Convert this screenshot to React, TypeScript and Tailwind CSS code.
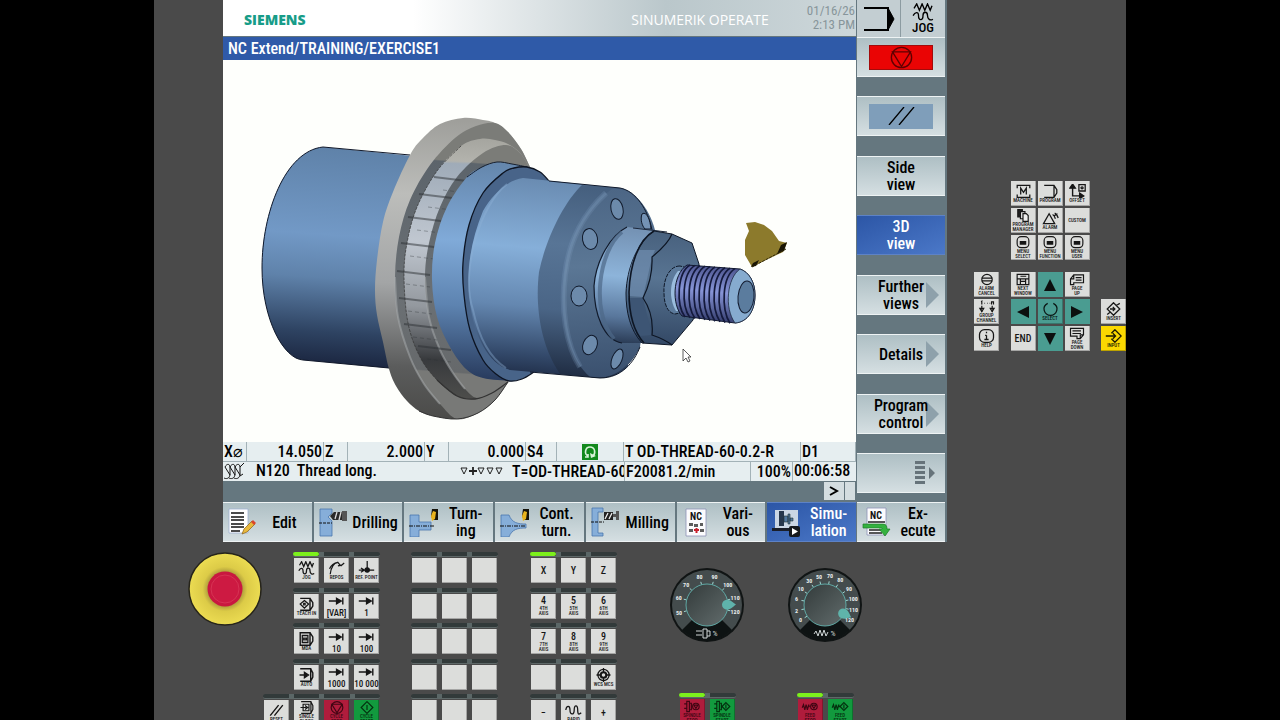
import type { ReactNode } from 'react';

const HMI_FONT = "font-['Roboto_Condensed','Roboto',sans-serif]";

/* ---------- Small drawings, one shared grid per icon ---------- */

const ICONS: Record<string, ReactNode> = {
  machine: (
    <>
      <path d="M3 6V2h18v4M3 15v4h18v-4" />
      <path d="M8 15V6l4 6 4-6v9" />
    </>
  ),
  program: <path d="M3 2h14l4 6v5l-4 6H3M17 2v17" />,
  offset: (
    <>
      <path d="M5 4v13h12" strokeWidth="2" />
      <path d="M1 6l4-6 4 6zM15 13l6 4-6 4z" fill="currentColor" />
      <path d="M14 1h9v9h-9z" />
      <circle cx="18.500" cy="5.500" r="1.500" />
    </>
  ),
  manager: (
    <>
      <path d="M4 1h7v11H4z" fill="#222" />
      <path d="M8 4h7v11H8z" fill="#ddd" />
      <path d="M12 7h5l3 3v9h-8z" fill="#eee" />
    </>
  ),
  alarm: <path d="M2 18L10 4l8 14zM15 5c2 1 3 3 4 6M18 3c3 1 4 4 5 7M17 7l5-3" />,
  menu: (
    <>
      <rect x="3" y="1" width="18" height="17" rx="6" />
      <path d="M7 9h10M7 12h10" strokeWidth="3" />
    </>
  ),
  cancel: (
    <>
      <circle cx="12" cy="10" r="8" />
      <path d="M4 8h16M4 12h16" />
    </>
  ),
  channel: (
    <>
      <path d="M4 9v9M20 9v9M8 5h1M12 5h1M16 5h1" />
      <path d="M1 13l3 5 3-5zM17 13l3 5 3-5zM3 3l1-1v5M19 7V3h3v4" fill="none" />
    </>
  ),
  help: (
    <>
      <rect x="2" y="1" width="20" height="18" rx="7" />
      <path d="M12 9v6M9 15h6M10 9h2M12 4v2" />
    </>
  ),
  window: <path d="M3 2h18v16H3zM3 9h18M8 9v9M8 13h8M16 9v9M8 5h9" />,
  pageUp: <path d="M7 3h15v12H7v3H2V9l5-6zM2 9h5V3M10 7h9M10 11h9" />,
  pageDown: <path d="M2 2h20v10l-5 6h-5v-4H2zM5 6h13M5 10h13M17 18v-6h5" />,
  select: <path d="M8 2C4 4 2 8 3 12c1 4 5 7 9 7s8-3 9-7c1-4-1-8-5-10" />,
  insert: <path d="M12 1l9 9-9 9-9-9zM7 10h7M11 7l3 3-3 3M16 5l5-3M8 14l-5 4" />,
  input: <path d="M9 6l5-5 9 9-9 9-5-5M1 10h14M11 6l4 4-4 4" />,
  jog: (
    <>
      <path d="M2 6l3-5 3 7 3-7 3 7 3-7 3 7 2-5" />
      <path d="M1 14c2-4 6-5 6 0 0 6 5 6 5 0 0-5 5-5 5 0 0 4 3 6 6 4" />
    </>
  ),
  repos: <path d="M3 19C4 10 8 3 14 2l4 5M2 11C5 5 9 3 14 2M18 7l5-4M14 7l5-1" />,
  refPoint: (
    <>
      <path d="M1 13h22M13 0v13M4 10l5 3-5 3" />
      <circle cx="13" cy="13" r="3" fill="currentColor" />
    </>
  ),
  teach: (
    <>
      <path d="M3 2h14v17H3M17 2l4 6v5l-4 6" strokeWidth="2" />
      <path d="M9 5l6 5-6 6-6-6zM8 12V9h2v3" />
    </>
  ),
  mda: (
    <>
      <path d="M3 1h14v18H3zM17 1l4 6v6l-4 6" strokeWidth="2" />
      <path d="M6 5h8v10H6zM8 12V8M10 12V8M12 12V8" />
    </>
  ),
  auto: (
    <>
      <path d="M3 1h15v18H3M18 1l3 6v6l-3 6" strokeWidth="2" />
      <path d="M2 10h9M9 6l6 4-6 4z" fill="currentColor" />
    </>
  ),
  step: (
    <>
      <path d="M1 10h15M21 5v10" strokeWidth="2" />
      <path d="M12 6l7 4-7 4z" fill="currentColor" />
    </>
  ),
  reset: <path d="M3 18L15 3M9 18L21 3" strokeWidth="2" />,
  single: (
    <>
      <path d="M3 1h15v18H3M18 1l3 6v6l-3 6" />
      <path d="M6 5h9v10H6zM2 10h9M9 7l4 3-4 3" />
    </>
  ),
  stop: (
    <>
      <circle cx="12" cy="10" r="9" />
      <path d="M4 5h16l-8 13z" />
    </>
  ),
  start: <path d="M12 1l9 9-9 9-9-9zM12 6v8" />,
  wcs: (
    <>
      <circle cx="12" cy="10" r="8" />
      <circle cx="12" cy="10" r="4" strokeWidth="3" />
      <path d="M12 0v6M12 14v6M2 10h6M16 10h6" />
    </>
  ),
  rapid: <path d="M1 10c1-7 6-7 6 0s6 8 6 0 5-8 5 0 2 6 5 4" />,
  spindleStop: (
    <>
      <path d="M0 6h4M0 13h4M4 2h4v16H4zM8 5h3v10H8z" />
      <circle cx="18" cy="10" r="5" />
      <path d="M15 8h6l-3 5z" />
    </>
  ),
  spindleStart: <path d="M0 6h4M0 13h4M4 2h4v16H4zM8 5h3v10H8zM18 4l6 6-6 6-6-6zM18 7v6" />,
  feedStop: (
    <>
      <path d="M0 12l2-5 2 8 2-8 2 8 2-8 1 4" />
      <circle cx="18" cy="10" r="5" />
      <path d="M15 8h6l-3 5z" />
    </>
  ),
  feedStart: <path d="M0 12l2-5 2 8 2-8 2 8 2-8 1 4M18 4l6 6-6 6-6-6zM18 7v6" />,
};

function Icon({
  name,
  className = 'h-[14px] w-[17px]',
  weight = 1.8,
}: {
  name: string;
  className?: string;
  weight?: number;
}) {
  return (
    <svg
      viewBox="0 0 24 20"
      className={`shrink-0 ${className}`}
      fill="none"
      stroke="currentColor"
      strokeWidth={weight}
      aria-hidden="true"
    >
      {ICONS[name]}
    </svg>
  );
}

/* ---------- Hardware keys ---------- */

interface KeyProps {
  icon?: string;
  big?: string;
  lines?: string[];
  tone?: string;
  label?: string;
}

function Key({ icon, big, lines = [], tone = 'bg-[#dcdddb] text-[#161616]', label }: KeyProps) {
  return (
    <button
      type="button"
      aria-label={label}
      className={`flex h-[25px] w-[25px] shrink-0 flex-col items-center justify-center overflow-hidden whitespace-nowrap shadow-[inset_-1px_-1px_0_rgba(0,0,0,0.25)] ${tone}`}
    >
      {icon && <Icon name={icon} className={lines.length > 1 ? 'h-[13px] w-[18px]' : 'h-[14px] w-[17px]'} />}
      {big && (
        <span className={`font-medium leading-[10px] ${icon ? 'text-[9px]' : 'text-[10px]'}`}>{big}</span>
      )}
      {lines.map((line) => (
        <span key={line} className="text-[5px] font-medium leading-[5px]">
          {line}
        </span>
      ))}
    </button>
  );
}

const TEAL = 'bg-[#4a9c91] text-[#0b1715]';
const RED = 'bg-[#b01c3c] text-[#3f0613]';
const GREEN = 'bg-[#129a3e] text-[#04300f]';

function Triangle({ rotate, label }: { rotate: string; label: string }) {
  return (
    <button
      type="button"
      aria-label={label}
      className={`flex h-[25px] w-[25px] items-center justify-center ${TEAL}`}
    >
      <svg viewBox="0 0 12 12" className={`h-3 w-3 ${rotate}`} fill="#0c0f0f" aria-hidden="true">
        <path d="M6 0l6 12H0z" />
      </svg>
    </button>
  );
}

function CursorKeys() {
  return (
    <aside className="grid w-[152px] shrink-0 grid-cols-[25px_1fr_25px] gap-y-[12px] overflow-hidden">
      <div />
      <div className="grid grid-cols-[25px_25px_25px] justify-center gap-[2px]">
        <Key icon="machine" lines={['MACHINE']} />
        <Key icon="program" lines={['PROGRAM']} />
        <Key icon="offset" lines={['OFFSET']} />
        <Key icon="manager" lines={['PROGRAM', 'MANAGER']} />
        <Key icon="alarm" lines={['ALARM']} />
        <Key lines={['CUSTOM']} />
        <Key icon="menu" lines={['MENU', 'SELECT']} />
        <Key icon="menu" lines={['MENU', 'FUNCTION']} />
        <Key icon="menu" lines={['MENU', 'USER']} />
      </div>
      <div />
      <div className="flex flex-col gap-[2px]">
        <Key icon="cancel" lines={['ALARM', 'CANCEL']} />
        <Key icon="channel" lines={['GROUP', 'CHANNEL']} />
        <Key icon="help" lines={['HELP']} />
      </div>
      <div className="grid grid-cols-[25px_25px_25px] justify-center gap-[2px]">
        <Key icon="window" lines={['NEXT', 'WINDOW']} />
        <Triangle rotate="rotate-0" label="Up" />
        <Key icon="pageUp" lines={['PAGE', 'UP']} />
        <Triangle rotate="-rotate-90" label="Left" />
        <Key icon="select" lines={['SELECT']} tone={TEAL} />
        <Triangle rotate="rotate-90" label="Right" />
        <Key big="END" />
        <Triangle rotate="rotate-180" label="Down" />
        <Key icon="pageDown" lines={['PAGE', 'DOWN']} />
      </div>
      <div className="flex flex-col justify-end gap-[2px]">
        <Key icon="insert" lines={['INSERT']} />
        <Key icon="input" lines={['INPUT']} tone="bg-[#fbd800] text-[#1d1a00]" />
      </div>
    </aside>
  );
}

function KeyRow({ keys, lit = false }: { keys: KeyProps[]; lit?: boolean }) {
  return (
    <div className="flex flex-col gap-px">
      <div className="-mx-px flex h-[5px] items-stretch rounded-full border-b border-[#5e6868] bg-[#323a3a]">
        {keys.map((_, i) => (
          <span
            key={i}
            className={`flex-1 ${lit && i === 0 ? 'rounded-full bg-[#7cf01c]' : ''} ${
              i > 0 ? 'border-l-[5px] border-[#5b6767]' : ''
            }`}
          />
        ))}
      </div>
      <div className="flex gap-[5px]">
        {keys.map((k, i) => (
          <Key key={i} {...k} />
        ))}
      </div>
    </div>
  );
}

const MODE_ROWS: KeyProps[][] = [
  [
    { icon: 'jog', lines: ['JOG'] },
    { icon: 'repos', lines: ['REPOS'] },
    { icon: 'refPoint', lines: ['REF. POINT'] },
  ],
  [
    { icon: 'teach', lines: ['TEACH IN'] },
    { icon: 'step', big: '[VAR]' },
    { icon: 'step', big: '1' },
  ],
  [
    { icon: 'mda', lines: ['MDA'] },
    { icon: 'step', big: '10' },
    { icon: 'step', big: '100' },
  ],
  [
    { icon: 'auto', lines: ['AUTO'] },
    { icon: 'step', big: '1000' },
    { icon: 'step', big: '10 000' },
  ],
  [
    { icon: 'reset', lines: ['RESET'] },
    { icon: 'single', lines: ['SINGLE', 'BLOCK'] },
    { icon: 'stop', lines: ['CYCLE', 'STOP'], tone: RED },
    { icon: 'start', lines: ['CYCLE', 'START'], tone: GREEN },
  ],
];

const BLANK_KEY: KeyProps = { label: 'Custom key' };
const BLANK_ROWS: KeyProps[][] = Array.from({ length: 5 }, () => [BLANK_KEY, BLANK_KEY, BLANK_KEY]);

const AXIS_ROWS: KeyProps[][] = [
  [{ big: 'X' }, { big: 'Y' }, { big: 'Z' }],
  [
    { big: '4', lines: ['4TH', 'AXIS'] },
    { big: '5', lines: ['5TH', 'AXIS'] },
    { big: '6', lines: ['6TH', 'AXIS'] },
  ],
  [
    { big: '7', lines: ['7TH', 'AXIS'] },
    { big: '8', lines: ['8TH', 'AXIS'] },
    { big: '9', lines: ['9TH', 'AXIS'] },
  ],
  [BLANK_KEY, BLANK_KEY, { icon: 'wcs', lines: ['WCS MCS'] }],
  [{ big: '−' }, { icon: 'rapid', lines: ['RAPID'] }, { big: '+' }],
];

function KeyBlock({ rows, lit = false }: { rows: KeyProps[][]; lit?: boolean }) {
  return (
    <div className="flex h-[173px] flex-col items-end justify-between">
      {rows.map((row, i) => (
        <KeyRow key={i} keys={row} lit={lit && i === 0} />
      ))}
    </div>
  );
}

/* ---------- Override dials ---------- */

interface DialProps {
  marks: { text: string; angle: number }[];
  pointer: number;
  feed?: boolean;
}

function polar(angle: number, r: number) {
  const a = (angle * Math.PI) / 180;
  return { x: 37 + r * Math.sin(a), y: 37 - r * Math.cos(a) };
}

function Dial({ marks, pointer, feed = false }: DialProps) {
  return (
    <svg viewBox="0 0 74 74" className="h-[74px] w-[74px]" aria-hidden="true">
      <defs>
        <linearGradient id={feed ? 'knobF' : 'knobS'} x1="0" y1="0" x2="1" y2="1">
          <stop offset="0" stopColor="#333b3b" />
          <stop offset="1" stopColor="#626c6c" />
        </linearGradient>
      </defs>
      <circle cx="37" cy="37" r="37" fill="#101414" />
      <circle cx="37" cy="37" r="35" fill="#444c4d" />
      <path d="M37 37L12 62a35 35 0 0050 0z" fill="#0e1313" />
      {marks.map((m) => {
        const a = polar(m.angle, 21);
        const b = polar(m.angle, 24);
        const t = polar(m.angle, 29);
        return (
          <g key={m.text}>
            <path d={`M${a.x} ${a.y}L${b.x} ${b.y}`} stroke="#9ed5d0" />
            <text x={t.x} y={t.y + 2} fontSize="6" fontWeight="700" fill="#e9eeee" textAnchor="middle">
              {m.text}
            </text>
          </g>
        );
      })}
      <circle cx="37" cy="37" r="21" fill={`url(#${feed ? 'knobF' : 'knobS'})`} stroke="#5fa8a4" />
      <path
        d="M37 8c2 3 5 5 5 9a5 5 0 01-10 0c0-4 3-6 5-9z"
        fill="#5fb3ab"
        transform={`rotate(${pointer} 37 37)`}
      />
      {feed ? (
        <path d="M26 66l2-3 2 5 2-6 2 6 2-6 2 6 2-4" fill="none" stroke="#cfd6d6" />
      ) : (
        <path d="M26 63h6M26 67h6M33 61h4v9h-4zM37 63h3v5h-3" fill="none" stroke="#cfd6d6" />
      )}
      <text x="45" y="68" fontSize="8" fill="#cfd6d6" textAnchor="middle">
        %
      </text>
    </svg>
  );
}

const SPINDLE_MARKS = [
  { text: '50', angle: -106 },
  { text: '60', angle: -76 },
  { text: '70', angle: -46 },
  { text: '80', angle: -15 },
  { text: '90', angle: 15 },
  { text: '100', angle: 46 },
  { text: '110', angle: 76 },
  { text: '120', angle: 104 },
];

const FEED_MARKS = [
  { text: '0', angle: -122 },
  { text: '2', angle: -101 },
  { text: '6', angle: -79 },
  { text: '10', angle: -57 },
  { text: '30', angle: -33 },
  { text: '50', angle: -12 },
  { text: '70', angle: 10 },
  { text: '80', angle: 32 },
  { text: '90', angle: 56 },
  { text: '100', angle: 78 },
  { text: '110', angle: 100 },
  { text: '120', angle: 122 },
];

function OverrideColumn({ children, keys }: { children: ReactNode; keys: KeyProps[] }) {
  return (
    <div className="flex flex-col items-center gap-[51px]">
      {children}
      <KeyRow keys={keys} lit />
    </div>
  );
}

function EmergencyStop() {
  return (
    <button type="button" aria-label="Emergency stop" className="h-[74px] w-[74px] rounded-full">
      <svg viewBox="0 0 74 74" aria-hidden="true">
        <defs>
          <radialGradient id="estop" cx="0.5" cy="0.5" r="0.5">
            <stop offset="0.450" stopColor="#a8963a" />
            <stop offset="0.620" stopColor="#dccb47" />
            <stop offset="1" stopColor="#ecdc52" />
          </radialGradient>
        </defs>
        <circle cx="37" cy="37" r="36" fill="url(#estop)" stroke="#26241a" strokeWidth="1.500" />
        <circle cx="37" cy="37" r="17.500" fill="#c9183f" />
        <circle cx="37" cy="37" r="14" fill="#cd1a42" stroke="#dd4462" strokeWidth="0.600" />
      </svg>
    </button>
  );
}

/* ---------- 3D simulation ---------- */

type Point = [number, number];

// Catmull-Rom spline through all points, as cubic segments
function spline(pts: Point[]): string {
  let d = `M${pts[0][0]} ${pts[0][1]}`;
  for (let i = 0; i < pts.length - 1; i++) {
    const p0 = pts[Math.max(i - 1, 0)];
    const p1 = pts[i];
    const p2 = pts[i + 1];
    const p3 = pts[Math.min(i + 2, pts.length - 1)];
    d += `C${p1[0] + (p2[0] - p0[0]) / 6} ${p1[1] + (p2[1] - p0[1]) / 6} ${p2[0] - (p3[0] - p1[0]) / 6} ${
      p2[1] - (p3[1] - p1[1]) / 6
    } ${p2[0]} ${p2[1]}`;
  }
  return d;
}

const RIM_1: Point[] = [
  [530, 167], [521, 149], [508, 132], [495, 123], [483, 120], [463, 118], [440, 124], [422, 139], [410, 155],
  [393, 192], [383, 222], [377, 260], [375, 290], [377, 315], [383, 342], [389, 369], [396, 386], [407, 401],
  [419, 411], [433, 416], [457, 419], [478, 413], [495, 400], [508, 382],
];
const FACE_1: Point[] = [
  [530, 167], [521, 149], [508, 132], [495, 123], [476, 126], [455, 138], [430, 165], [410, 200], [399, 237],
  [395, 277], [398, 317], [410, 357], [424, 384], [440, 404], [457, 419], [478, 413], [495, 400], [508, 382],
];
const RIM_2: Point[] = [
  [529, 167], [520, 153], [508, 144], [495, 140], [480, 139], [461, 146], [437, 171], [417, 207], [407, 243],
  [404, 277], [408, 323], [420, 357], [437, 380], [457, 396], [475, 399], [492, 393], [508, 382],
];
const FACE_2: Point[] = [
  [529, 167], [520, 153], [506, 145], [483, 153], [457, 177], [440, 207], [429, 243], [425, 277], [429, 317],
  [440, 350], [453, 373], [465, 389], [477, 398], [492, 393], [508, 382],
];
const FLANGE: Point[] = [
  [527, 167], [512, 164], [497, 162], [482, 167], [467, 177], [447, 207], [435, 243], [432, 280], [437, 317],
  [450, 347], [466, 369], [483, 378], [510, 381],
];
const FLANGE_FRONT: Point[] = [
  [549, 181], [540, 172], [527, 167], [514, 168], [503, 173], [483, 193], [469, 225], [463, 263], [464, 295],
  [470, 330], [483, 360], [496, 374], [509, 381], [522, 379], [534, 372],
];

const HOLES = [
  { x: 617, y: 209, rx: 6, ry: 10.5, r: -12 },
  { x: 590, y: 239, rx: 7.5, ry: 10.5, r: -10 },
  { x: 579, y: 296, rx: 8, ry: 10, r: 0 },
  { x: 590, y: 345, rx: 7, ry: 10, r: 22 },
  { x: 617, y: 359, rx: 5, ry: 10.5, r: 22 },
];

// left end of each chuck jaw line, drawn towards the flange
const CHUCK_MARKS: Point[] = [
  [434, 177], [419, 194], [408, 217], [401, 243], [397, 271], [399, 298], [404, 324], [418, 346],
];

function Workpiece() {
  return (
    <svg viewBox="223 60 633 382" className="block h-auto w-full bg-[#fefffc]" role="img" aria-label="3D view">
      <defs>
        <linearGradient id="stock" gradientUnits="userSpaceOnUse" x1="360" y1="150" x2="345" y2="366">
          <stop offset="0" stopColor="#5f82a9" />
          <stop offset="0.400" stopColor="#7299c6" />
          <stop offset="0.600" stopColor="#5f82aa" />
          <stop offset="0.850" stopColor="#2e4362" />
          <stop offset="1" stopColor="#1b2640" />
        </linearGradient>
        <linearGradient id="flange" gradientUnits="userSpaceOnUse" x1="480" y1="165" x2="470" y2="382">
          <stop offset="0" stopColor="#6587ad" />
          <stop offset="0.350" stopColor="#80aad8" />
          <stop offset="0.650" stopColor="#5d83b0" />
          <stop offset="1" stopColor="#26385a" />
        </linearGradient>
        <linearGradient id="body" gradientUnits="userSpaceOnUse" x1="540" y1="180" x2="525" y2="374">
          <stop offset="0" stopColor="#6a8cb2" />
          <stop offset="0.350" stopColor="#86afd9" />
          <stop offset="0.650" stopColor="#6487b0" />
          <stop offset="0.900" stopColor="#33496a" />
          <stop offset="1" stopColor="#22314c" />
        </linearGradient>
        <linearGradient id="chamfer" gradientUnits="userSpaceOnUse" x1="575" y1="188" x2="560" y2="376">
          <stop offset="0" stopColor="#46607f" />
          <stop offset="0.300" stopColor="#587596" />
          <stop offset="0.650" stopColor="#4a6586" />
          <stop offset="1" stopColor="#1f2c42" />
        </linearGradient>
        <linearGradient id="front" gradientUnits="userSpaceOnUse" x1="600" y1="190" x2="612" y2="378">
          <stop offset="0" stopColor="#4c6685" />
          <stop offset="0.400" stopColor="#5b7795" />
          <stop offset="1" stopColor="#3a506e" />
        </linearGradient>
        <linearGradient id="boss" gradientUnits="userSpaceOnUse" x1="620" y1="230" x2="612" y2="345">
          <stop offset="0" stopColor="#7593b5" />
          <stop offset="0.400" stopColor="#8db4da" />
          <stop offset="0.750" stopColor="#59779c" />
          <stop offset="1" stopColor="#26364f" />
        </linearGradient>
        <linearGradient id="nut" gradientUnits="userSpaceOnUse" x1="660" y1="232" x2="655" y2="346">
          <stop offset="0" stopColor="#48617e" />
          <stop offset="0.400" stopColor="#587492" />
          <stop offset="1" stopColor="#324764" />
        </linearGradient>
        <linearGradient id="thread" gradientUnits="userSpaceOnUse" x1="712" y1="266" x2="706" y2="322">
          <stop offset="0" stopColor="#4e5690" />
          <stop offset="0.450" stopColor="#8795d8" />
          <stop offset="1" stopColor="#333b6b" />
        </linearGradient>
        <linearGradient id="rim1" gradientUnits="userSpaceOnUse" x1="430" y1="120" x2="420" y2="418">
          <stop offset="0" stopColor="#9f9f9b" />
          <stop offset="0.250" stopColor="#bcbdba" />
          <stop offset="0.550" stopColor="#a3a5a6" />
          <stop offset="0.830" stopColor="#5b5c5c" />
          <stop offset="1" stopColor="#4b4b49" />
        </linearGradient>
        <linearGradient id="rim2" gradientUnits="userSpaceOnUse" x1="470" y1="138" x2="460" y2="400">
          <stop offset="0" stopColor="#a5a59f" />
          <stop offset="0.090" stopColor="#b3b3ad" />
          <stop offset="0.100" stopColor="#9fabb8" />
          <stop offset="0.400" stopColor="#c0c7d0" />
          <stop offset="0.650" stopColor="#93989e" />
          <stop offset="0.850" stopColor="#383a3d" />
          <stop offset="1" stopColor="#4e4e4c" />
        </linearGradient>
        <linearGradient id="face" gradientUnits="userSpaceOnUse" x1="455" y1="120" x2="432" y2="420">
          <stop offset="0" stopColor="#7b7c78" />
          <stop offset="0.135" stopColor="#7b7c78" />
          <stop offset="0.140" stopColor="#5c646b" />
          <stop offset="0.600" stopColor="#6b7074" />
          <stop offset="0.835" stopColor="#66696b" />
          <stop offset="0.840" stopColor="#787977" />
          <stop offset="1" stopColor="#787977" />
        </linearGradient>
      </defs>

      {/* raw stock */}
      <path
        d="M323 147C285 151 262 213 262 268c0 52 22 91 41 92l180 17 20-212z"
        fill="url(#stock)"
      />
      <path d="M410 155L323 147C285 151 262 213 262 268c0 52 22 91 41 92l86 8" fill="none" stroke="#10182a" />

      {/* clamping ring, two steps of rim and face */}
      <path d={`${spline(RIM_1)}Z`} fill="url(#rim1)" />
      <path d={`${spline(FACE_1)}Z`} fill="url(#face)" />
      <path d={`${spline(RIM_2)}Z`} fill="url(#rim2)" />
      <path d={`${spline(FACE_2)}Z`} fill="url(#face)" />
      <path d={spline(RIM_2.slice(5, 14))} fill="none" stroke="#333" strokeWidth="0.700" strokeDasharray="3 1" />
      <path
        d={`${spline(FACE_1.slice(9, 14))}${spline(FACE_2.slice(7, 12))}`}
        fill="none"
        stroke="#a9adb0"
        strokeWidth="2"
        strokeOpacity="0.500"
      />
      {CHUCK_MARKS.map(([x, y]) => (
        <g key={y} stroke="#2c3034">
          <path d={`M${x} ${y}l33 4`} strokeWidth="2" strokeOpacity="0.500" />
          <path d={`M${x + 9} ${y + 13}l24 3`} strokeDasharray="4 3" strokeOpacity="0.350" />
        </g>
      ))}
      <path d={spline(RIM_1.slice(18))} fill="none" stroke="#333" />
      <path d={spline(RIM_2.slice(12))} fill="none" stroke="#333" strokeWidth="1.300" />

      {/* flange disc */}
      <path d={`${spline(FLANGE)}Z`} fill="url(#flange)" />
      <path d={spline(FLANGE.slice(0, 5))} fill="none" stroke="#17202f" />
      <path d={`${spline(FLANGE_FRONT)}Z`} fill="#486489" />
      <path d={spline(FLANGE_FRONT)} fill="none" stroke="#0d1422" strokeWidth="1.300" />

      {/* turned body */}
      <path
        d="M523 178C507 180 492 195 483 211C470 243 466 272 470 303C474 335 488 364 510 370L600 378C612 378 622 373 628 366L620 188Z"
        fill="url(#body)"
      />
      <path d="M507 184C480 205 460 272 473 310C479 338 490 358 506 368" fill="none" stroke="#8fb2d8" strokeWidth="2" strokeOpacity="0.400" />
      <path
        d="M582 185C564 202 546 238 539 272C535 305 540 345 560 374L600 378C620 378 634 360 640 347L652 228C648 208 635 190 620 188Z"
        fill="url(#chamfer)"
      />
      <path
        d="M612 189C590 205 570 235 565 270C560 310 565 355 590 377C615 382 634 362 640 345L655 230C648 205 632 187 612 189Z"
        fill="url(#front)"
      />
      <path
        d="M606 193C585 212 569 240 565 275C561 310 566 345 580 367"
        fill="none"
        stroke="#87a6c8"
        strokeWidth="6"
        strokeOpacity="0.200"
      />
      <path
        d="M606 193C585 212 569 240 565 275C561 310 566 345 580 367"
        fill="none"
        stroke="#87a6c8"
        strokeWidth="3"
        strokeOpacity="0.250"
      />
      <path d="M549 181L620 188C636 191 648 210 652 230M530 372L600 378C622 378 634 362 640 347" fill="none" stroke="#111a2b" />
      {HOLES.map((h) => (
        <ellipse
          key={`${h.x}-${h.y}`}
          cx={h.x}
          cy={h.y}
          rx={h.rx}
          ry={h.ry}
          transform={`rotate(${h.r} ${h.x} ${h.y})`}
          fill="#6c8aab"
          stroke="#10192a"
        />
      ))}
      <path d="M651 229C650 218 646 211 642 214C640 219 642 226 645 229Z" fill="#7492b4" stroke="#10192a" />

      {/* boss */}
      <path
        d="M627 227C611 235 596 260 594 286C594 315 604 340 622 343L645 343L660 231Z"
        fill="url(#boss)"
      />
      <path d="M627 227C611 235 596 260 594 286C594 315 604 340 622 343" fill="none" stroke="#111a2b" strokeWidth="1.200" />
      <path d="M622 232C599 250 590 312 614 339" fill="none" stroke="#4d6887" strokeWidth="4" strokeOpacity="0.700" />
      <path d="M633 228L667 232" stroke="#1b2639" />

      {/* hex nut */}
      <path
        d="M654 231L672 234L692 243L699 264C699 285 697 305 693 320L672 345L642 343C630 330 626 312 626 293C627 268 637 243 654 231Z"
        fill="url(#nut)"
        stroke="#0f1828"
      />
      <path d="M637 250C628 270 627 280 628 296L643 297L652 257L655 250Z" fill="#7492b5" fillOpacity="0.600" />
      <path d="M628 298L643 298L652 335L640 336C631 325 628 312 628 298Z" fill="#3d5574" />
      <path
        d="M672 234Q668 244 652 257Q653 278 643 298Q654 314 652 335Q664 339 672 345"
        fill="none"
        stroke="#0d1523"
        strokeWidth="1.200"
      />
      <path d="M654 231C638 240 630 265 629 292C629 315 634 332 644 343" fill="none" stroke="#0d1523" strokeWidth="1.600" />

      {/* neck and thread */}
      <path d="M680 266C668 266 663 282 664 293C664 305 668 313 675 314L684 312L688 268Z" fill="#5c7a9b" stroke="#0e1727" strokeDasharray="4 1" />
      <path d="M678 271C669 281 669 300 676 311L682 311L684 271Z" fill="#9abcdd" />
      <path
        d="M687 265L740 269C749 272 755 282 755 295C755 310 748 322 735 323L682 316C672 305 672 275 687 265Z"
        fill="url(#thread)"
        stroke="#10182e"
      />
      {[0, 1, 2, 3, 4, 5, 6, 7, 8, 9].map((i) => (
        <path
          key={i}
          d={`M${690 + i * 5} ${265 + i * 0.4}c-13 8 -14 40 -5 ${52 + i * 0.3}`}
          fill="none"
          stroke="#141a3c"
          strokeWidth="1.700"
        />
      ))}
      <path d="M740 269C727 278 724 308 735 323C748 322 755 310 755 295C755 282 749 272 740 269Z" fill="#86abcf" stroke="#131c30" strokeWidth="0.700" />
      <ellipse cx="746" cy="297" rx="8" ry="16" fill="#5b7c9e" stroke="#131c30" transform="rotate(5 746 297)" />

      {/* cutting insert */}
      <path
        d="M746 223L755 222L764 225L772 231L779 241L787 243L783 252L766 260L752 267L745 255L745 240L749 231Z"
        fill="#8c7a2c"
      />
      <path d="M781 245L787 242L784 251L777 254ZM753 263L759 260L756 266L751 267Z" fill="#1a1504" />
      <path d="M786 249L752 267" stroke="#2f270a" strokeDasharray="3 1" />

      {/* pointer */}
      <path d="M683 349v12l3-3 2 4 2-1-2-4h3z" fill="#fff" stroke="#333" strokeWidth="0.800" />
    </svg>
  );
}

/* ---------- HMI softkeys ---------- */

const KEY_FACE = 'bg-linear-to-b from-[#aebfc4] to-[#d5dfe2] border-t border-b border-[#eef3f4]';
const KEY_ACTIVE = 'bg-linear-to-br from-[#2c56a6] to-[#4b78c8] border-t border-b border-[#5d82c6] text-white';

function SideKey({ children, active = false, label }: { children: ReactNode; active?: boolean; label?: string }) {
  return (
    <button
      type="button"
      aria-label={label}
      className={`flex h-[40px] w-full items-center justify-center text-center text-[16px] font-medium leading-[17px] ${
        active ? KEY_ACTIVE : KEY_FACE
      }`}
    >
      {children}
    </button>
  );
}

function MoreKey({ lines }: { lines: string[] }) {
  return (
    <SideKey>
      <span className="relative flex w-full flex-col items-center">
        <svg viewBox="0 0 13 26" className="absolute right-[6px] top-1/2 h-[26px] w-[13px] -translate-y-1/2" aria-hidden="true">
          <path d="M0 0l13 13L0 26z" fill="#8ea1ab" />
        </svg>
        {lines.map((l) => (
          <span key={l} className="relative">
            {l}
          </span>
        ))}
      </span>
    </SideKey>
  );
}

const BLUE_PART = '#86aed9';

function EditIcon() {
  return (
    <svg viewBox="0 0 30 30" className="h-[30px] w-[30px]" aria-hidden="true">
      <path d="M2 2h19v24H2z" fill="#fff" stroke="#9fb0d0" strokeWidth="0.800" />
      <path d="M4 6h13M4 10h13M4 13h13M4 17h13M4 20h13M4 24h9" stroke="#111" strokeWidth="1.500" />
      <path d="M17 22l8-8 3 3-8 8-5 2z" fill="#e8b93c" stroke="#8a5e16" strokeWidth="0.700" />
      <path d="M24 15l2-2 3 3-2 2z" fill="#d9452c" />
    </svg>
  );
}

function DrillIcon() {
  return (
    <svg viewBox="0 0 30 30" className="h-[30px] w-[30px]" aria-hidden="true">
      <path d="M2 2h12v4l-4 4 4 4v15H2z" fill={BLUE_PART} stroke="#4a76ad" strokeWidth="0.800" />
      <path d="M1 16h13" stroke="#111" strokeDasharray="3 1" />
      <path d="M12 9l4-4h8v8h-9z" fill="#2a2a2a" />
      <path d="M17 12l2-7M21 13l2-8" stroke="#ddd" strokeWidth="1.300" />
      <path d="M24 4h5v10h-5z" fill="#555" />
    </svg>
  );
}

function TurnIcon({ contour = false }: { contour?: boolean }) {
  return (
    <svg viewBox="0 0 30 30" className="h-[30px] w-[30px]" aria-hidden="true">
      {contour ? (
        <path d="M2 8h8c3 8 9 9 17 9v4c-8 0-14 1-17 9H2z" fill={BLUE_PART} stroke="#4a76ad" strokeWidth="0.800" />
      ) : (
        <path d="M2 8h9v7h12v8H11v7H2z" fill={BLUE_PART} stroke="#4a76ad" strokeWidth="0.800" />
      )}
      <path d="M1 19h26" stroke="#111" strokeDasharray="4 1 1 1" />
      <path d="M24 2h6v11h-5l-2-4z" fill="#16130a" />
      <path d="M25 4l3 1-1 7-3 2-1-5z" fill="#eab41d" />
    </svg>
  );
}

function MillIcon() {
  return (
    <svg viewBox="0 0 30 30" className="h-[30px] w-[30px]" aria-hidden="true">
      <path d="M2 1h11v4H8v21h5v3H2z" fill={BLUE_PART} stroke="#4a76ad" strokeWidth="0.800" />
      <path d="M1 15h13" stroke="#111" strokeDasharray="3 1" />
      <path d="M14 5h9v8h-9z" fill="#222" />
      <path d="M15 12l3-6M19 12l3-6" stroke="#eee" strokeWidth="1.300" />
      <path d="M23 7h3V4h3v9h-3v-3h-3z" fill="#555" />
    </svg>
  );
}

function VariousIcon() {
  return (
    <svg viewBox="0 0 30 30" className="h-[30px] w-[30px]" aria-hidden="true">
      <path d="M5 2h20v27H5z" fill="#fbfbfd" stroke="#8d93b5" strokeWidth="0.800" />
      <text x="15" y="13" fontSize="10" fontWeight="700" textAnchor="middle" fill="#111">
        NC
      </text>
      <path d="M8 16h4v3H8zM13 17h4v3h-4zM19 16h3v3h-3zM8 22h4v3H8zM19 22h4v3h-4z" fill="#5c5c5c" />
      <path d="M13 23h5M15.500 21v5" stroke="#c8202c" strokeWidth="2" />
    </svg>
  );
}

function SimulationIcon() {
  return (
    <svg viewBox="0 0 30 30" className="h-[30px] w-[30px]" aria-hidden="true">
      <path d="M4 3h23v18H4z" fill="#cbd6e4" />
      <path d="M1 21h25v3H1z" fill="#1b1f2a" />
      <path d="M8 4h5v15H8z" fill="#27374c" />
      <path d="M13 9h4v6h-4zM17 7h2v10h-2zM19 11h3v3h-3z" fill="#52779f" stroke="#233" strokeWidth="0.600" />
      <rect x="18" y="19" width="11" height="11" rx="2" fill="#15181d" />
      <path d="M21 21l6 3.500-6 3.500z" fill="#fff" />
    </svg>
  );
}

function ExecuteIcon() {
  return (
    <svg viewBox="0 0 30 30" className="h-[30px] w-[30px]" aria-hidden="true">
      <path d="M6 1h19v27H6z" fill="#fbfbfd" stroke="#8d93b5" strokeWidth="0.800" />
      <text x="15" y="12" fontSize="10" fontWeight="700" textAnchor="middle" fill="#111">
        NC
      </text>
      <path d="M7 15h17M8 23h13M8 26h13" stroke="#222" strokeWidth="1.400" />
      <path d="M2 17h20c3 0 4 2 4 5h3l-5 7-6-7h3c0-1 0-1-1-1H2z" fill="#34b13f" stroke="#1d7c28" strokeWidth="0.700" />
    </svg>
  );
}

interface BottomKeyProps {
  icon: ReactNode;
  lines: string[];
  active?: boolean;
}

function BottomKey({ icon, lines, active = false }: BottomKeyProps) {
  return (
    <button
      type="button"
      className={`flex h-[40px] min-w-0 items-center pl-1 text-[16px] font-medium leading-[17px] ${
        active ? KEY_ACTIVE : KEY_FACE
      }`}
    >
      <span className="shrink-0">{icon}</span>
      <span className="flex flex-1 flex-col items-center whitespace-nowrap">
        {lines.map((l) => (
          <span key={l}>{l}</span>
        ))}
      </span>
    </button>
  );
}

const BOTTOM_KEYS: BottomKeyProps[] = [
  { icon: <EditIcon />, lines: ['Edit'] },
  { icon: <DrillIcon />, lines: ['Drilling'] },
  { icon: <TurnIcon />, lines: ['Turn-', 'ing'] },
  { icon: <TurnIcon contour />, lines: ['Cont.', 'turn.'] },
  { icon: <MillIcon />, lines: ['Milling'] },
  { icon: <VariousIcon />, lines: ['Vari-', 'ous'] },
  { icon: <SimulationIcon />, lines: ['Simu-', 'lation'], active: true },
];

function Cell({ children, right = false }: { children?: ReactNode; right?: boolean }) {
  return (
    <span
      className={`flex items-center overflow-hidden whitespace-nowrap border-r border-[#a3b2b7] ${
        right ? 'justify-end pr-px' : 'pl-px'
      }`}
    >
      {children}
    </span>
  );
}

function StatusLines() {
  return (
    <div className="flex flex-col gap-px bg-[#a3b2b7] text-[16px] font-medium leading-[18px] text-black">
      <div className="grid h-[19px] grid-cols-[24fr_77fr_24fr_77fr_24fr_77fr_31fr_67fr_177fr_55fr] bg-[#e6eef0]">
        <Cell>X⌀</Cell>
        <Cell right>14.050</Cell>
        <Cell>Z</Cell>
        <Cell right>2.000</Cell>
        <Cell>Y</Cell>
        <Cell right>0.000</Cell>
        <Cell>S4</Cell>
        <span className="flex items-center justify-center border-r border-[#a3b2b7]">
          <svg viewBox="0 0 16 16" className="h-4 w-4 bg-[#12891d]" role="img" aria-label="Spindle running">
            <path d="M6 12C2 10 3 3 8 3s6 6 3 9M3 13h3v-3" fill="none" stroke="#d9f3da" strokeWidth="1.600" />
            <path d="M8 9l1 5 5-2z" fill="#d9f3da" />
          </svg>
        </span>
        <Cell>T OD-THREAD-60-0.2-R</Cell>
        <Cell>D1</Cell>
      </div>
      <div className="grid h-[19px] grid-cols-[33fr_204fr_51fr_114fr_126fr_42fr_63fr] bg-[#e6eef0]">
        <svg viewBox="0 0 22 18" className="h-[18px] w-[22px]" fill="none" stroke="#111" aria-hidden="true">
          <path d="M2 5c2-4 5-3 5 0v8c-1 4-4 4-6 3M7 5c2-4 5-3 5 0v8c-1 4-4 4-6 3M12 5c2-4 5-3 5 0v8c-1 4-4 4-6 3M2 5l5 8M7 5l5 8M12 5l5 8M17 5l4-4M17 14l3-2" />
        </svg>
        <span className="whitespace-pre">N120  Thread long.</span>
        <svg viewBox="0 0 44 18" className="h-[18px] w-[44px]" fill="none" stroke="#222" aria-hidden="true">
          <path d="M1 6h6l-3 6zM18 6h6l-3 6zM27 6h6l-3 6zM36 6h6l-3 6z" />
          <path d="M9 9h8M13 5v8" strokeWidth="1.800" />
        </svg>
        <Cell>T=OD-THREAD-60</Cell>
        <Cell>F20081.2/min</Cell>
        <Cell right>100%</Cell>
        <span className="overflow-hidden whitespace-nowrap pl-px">00:06:58</span>
      </div>
    </div>
  );
}

function Screen() {
  return (
    <main className="min-w-0 flex-1 bg-[#65777f] pr-[2px] text-black">
      <div className="flex gap-px">
        <div className="flex min-w-0 flex-1 flex-col">
          <header className="flex h-[36px] items-center justify-end bg-linear-to-r from-white from-30% via-[#bac7cb] via-70% to-[#cdd7da]">
            <span className="mr-auto pl-[21px] pt-[2px] font-['Open_Sans',sans-serif] text-[14px] font-extrabold text-[#179c88]">
              SIEMENS
            </span>
            <span className="pr-[38px] pt-[2px] font-['Open_Sans',sans-serif] text-[14px] text-white">
              SINUMERIK OPERATE
            </span>
            <span className="pr-px text-right text-[13px] leading-[14px] text-[#87959a]">
              01/16/26
              <br />
              2:13 PM
            </span>
          </header>
          <h1 className="mt-px h-[23px] bg-[#2f5aa8] pl-[5px] text-[16px] font-medium leading-[23px] text-white">
            NC Extend/TRAINING/EXERCISE1
          </h1>
          <Workpiece />
          <StatusLines />
          <div className="flex h-[21px] justify-end gap-px pt-px">
            <button type="button" aria-label="Expand" className="flex h-[18px] w-[20px] items-center justify-center bg-[#d4dde0]">
              <svg viewBox="0 0 10 10" className="h-[10px] w-[10px]" fill="none" stroke="#000" strokeWidth="2" aria-hidden="true">
                <path d="M1 1l7 4-7 4" />
              </svg>
            </button>
            <span className="mr-px h-[18px] w-[10px] bg-[#d4dde0]" />
          </div>
        </div>
        <nav className="flex w-[88px] shrink-0 flex-col">
          <div className="grid h-[37px] grid-cols-2 bg-[#c3ced2]">
            <span className="flex items-center justify-center border-r border-[#8c9ba1]">
              <svg viewBox="0 0 32 26" className="h-[26px] w-[32px]" fill="none" stroke="#000" strokeWidth="2" aria-hidden="true">
                <path d="M1 2h24v22H1" />
                <path d="M25 2l6 11-6 11z" fill="#000" strokeWidth="1" />
              </svg>
            </span>
            <span className="flex flex-col items-center justify-center text-[13px] font-medium leading-[13px]">
              <Icon name="jog" className="h-[18px] w-[22px]" weight={1.5} />
              JOG
            </span>
          </div>
          <div className="mb-[9px] flex flex-1 flex-col justify-between">
            <SideKey label="Stop">
              <span className="flex h-[25px] w-[64px] items-center justify-center border border-[#a30b0b] bg-[#ea0404] text-[#5e0000]">
                <Icon name="stop" className="h-[23px] w-[27px]" weight={1.2} />
              </span>
            </SideKey>
            <SideKey label="Reset">
              <span className="flex h-[25px] w-[64px] items-center justify-center bg-[#7f9eba]">
                <svg viewBox="0 0 28 18" className="h-[18px] w-[28px]" stroke="#000" strokeWidth="1.300" aria-hidden="true">
                  <path d="M2 18L17 0M12 18L27 0" />
                </svg>
              </span>
            </SideKey>
            <SideKey>
              Side
              <br />
              view
            </SideKey>
            <SideKey active>
              3D
              <br />
              view
            </SideKey>
            <MoreKey lines={['Further', 'views']} />
            <MoreKey lines={['Details']} />
            <MoreKey lines={['Program', 'control']} />
            <SideKey label="More functions">
              <svg viewBox="0 0 20 24" className="ml-auto mr-[10px] h-[24px] w-[20px]" fill="#66737a" aria-hidden="true">
                <path d="M0 0h10v3H0zM0 5h10v3H0zM0 10h10v3H0zM0 15h10v3H0zM0 20h10v3H0zM14 6l6 6-6 6z" />
              </svg>
            </SideKey>
          </div>
        </nav>
      </div>
      <div className="flex gap-px">
        <div className="grid min-w-0 flex-1 grid-cols-7 gap-[2px]">
          {BOTTOM_KEYS.map((k) => (
            <BottomKey key={k.lines[0]} {...k} />
          ))}
        </div>
        <div className="grid w-[88px] shrink-0">
          <BottomKey icon={<ExecuteIcon />} lines={['Ex-', 'ecute']} />
        </div>
      </div>
    </main>
  );
}

export default function App() {
  return (
    <div className="h-screen overflow-hidden bg-black px-[154px]">
      <div className={`min-h-full bg-[#4a4a4a] ${HMI_FONT}`}>
        <div className="flex pl-[69px]">
          <Screen />
          <div className="ml-[27px] mt-[181px]">
            <CursorKeys />
          </div>
        </div>
        <section className="flex pl-[34px] pt-[10px]">
          <EmergencyStop />
          <div className="ml-[2px]">
            <KeyBlock rows={MODE_ROWS} lit />
          </div>
          <div className="ml-[33px]">
            <KeyBlock rows={BLANK_ROWS} />
          </div>
          <div className="ml-[34px]">
            <KeyBlock rows={AXIS_ROWS} lit />
          </div>
          <div className="ml-[54px] mt-[16px] flex gap-[44px]">
            <OverrideColumn
              keys={[
                { icon: 'spindleStop', lines: ['SPINDLE', 'STOP'], tone: RED },
                { icon: 'spindleStart', lines: ['SPINDLE', 'START'], tone: GREEN },
              ]}
            >
              <Dial marks={SPINDLE_MARKS} pointer={89} />
            </OverrideColumn>
            <OverrideColumn
              keys={[
                { icon: 'feedStop', lines: ['FEED', 'STOP'], tone: RED },
                { icon: 'feedStart', lines: ['FEED', 'START'], tone: GREEN },
              ]}
            >
              <Dial marks={FEED_MARKS} pointer={115} feed />
            </OverrideColumn>
          </div>
        </section>
      </div>
    </div>
  );
}
